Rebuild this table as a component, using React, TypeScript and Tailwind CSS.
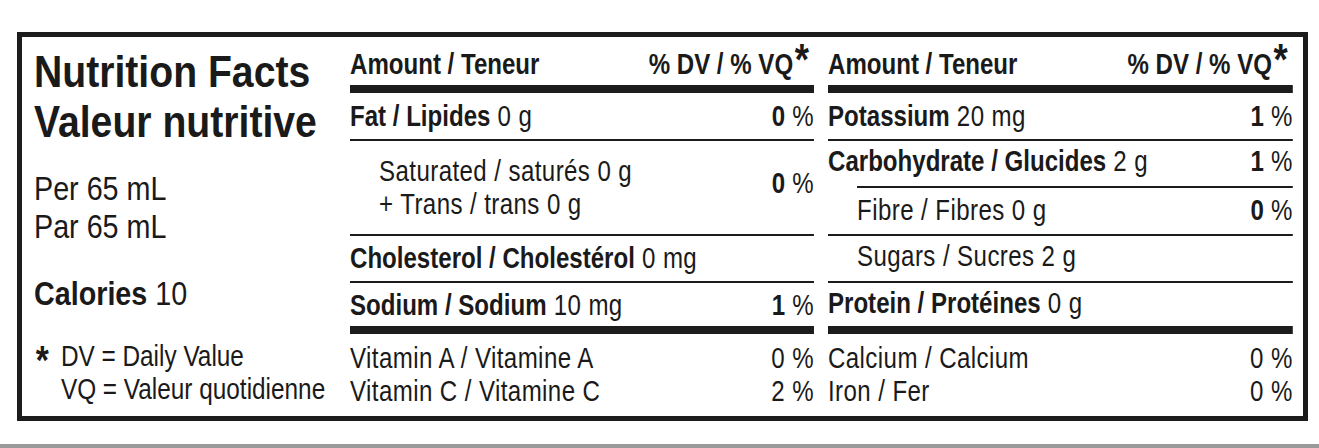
import React from 'react';

// Helvetica Condensed look: Liberation Sans squeezed horizontally per column

function B({ children }: { children: React.ReactNode }) {
  return <span className="font-bold tracking-normal">{children}</span>;
}

function Pct({ value, bold = true }: { value: string; bold?: boolean }) {
  return (
    <span className="whitespace-nowrap">
      {bold ? <B>{value}</B> : value} %
    </span>
  );
}

function Thin({ indent = false }: { indent?: boolean }) {
  return <div className={`h-[2px] bg-[#1c1c1c] ${indent ? 'ml-[35px]' : ''}`} />;
}

function Thick() {
  return <div className="h-[8px] bg-[#1c1c1c]" />;
}

function Header() {
  return (
    <div className="flex h-[48px] items-center justify-between pr-[6px] pt-[8px] font-bold tracking-normal">
      <span>Amount / Teneur</span>
      <span className="whitespace-nowrap">
        % DV / % VQ<span className="relative top-[1px] ml-[2px] text-[44px] leading-[0px]">*</span>
      </span>
    </div>
  );
}

export default function App() {
  return (
    <div className="flex h-[448px] w-[1319px] flex-col overflow-hidden bg-white text-[#1a1a1a] font-['Liberation_Sans',Arial,sans-serif]">
      <div className="ml-[17px] mt-[32px] flex h-[389px] w-[1291px] shrink-0 border-[5px] border-[#1c1c1c] pl-[12px] pr-[10px] text-[29px]">
        {/* Left: title + serving */}
        <div className="w-[316px] shrink-0 whitespace-nowrap">
          <div className="mt-[10px] origin-left scale-x-[0.87] text-[45px] font-bold leading-[50px]">
            <div>Nutrition Facts</div>
            <div>Valeur nutritive</div>
          </div>
          <div className="mt-[23px] origin-left scale-x-[0.87] text-[33px] leading-[38px]">
            <div>Per 65 mL</div>
            <div>Par 65 mL</div>
          </div>
          <div className="mt-[29px] origin-left scale-x-[0.87] text-[33px] leading-[38px]">
            <span className="font-bold">Calories</span> 10
          </div>
          <div className="mt-[27px] grid origin-left scale-x-[0.84] grid-cols-[32px_1fr] leading-[33px]">
            <span className="relative top-[4px] pl-[2px] text-[40px] font-bold leading-[33px]">*</span>
            <span>DV = Daily Value</span>
            <span />
            <span>VQ = Valeur quotidienne</span>
          </div>
        </div>

        {/* Middle column */}
        <div className="w-[464px] shrink-0">
          <div className="w-[559px] origin-left scale-x-[0.83] tracking-[0.5px]">
            <Header />
            <Thick />
            <div className="flex h-[46px] items-center justify-between pt-[2px]">
              <span><B>Fat / Lipides</B> 0 g</span>
              <Pct value="0" />
            </div>
            <Thin />
            <div className="flex h-[93px] items-center justify-between pl-[35px] leading-[33px]">
              <div>
                <div>Saturated / saturés 0 g</div>
                <div>+ Trans / trans 0 g</div>
              </div>
              <span className="mb-[8px]">
                <Pct value="0" />
              </span>
            </div>
            <Thin />
            <div className="flex h-[45px] items-center">
              <span><B>Cholesterol / Cholestérol</B> 0 mg</span>
            </div>
            <Thin />
            <div className="flex h-[43px] items-center justify-between pt-[2px]">
              <span><B>Sodium / Sodium</B> 10 mg</span>
              <Pct value="1" />
            </div>
            <Thick />
            <div className="flex h-[82px] flex-col justify-center leading-[33px]">
              <div className="flex justify-between">
                <span>Vitamin A / Vitamine A</span>
                <Pct value="0" bold={false} />
              </div>
              <div className="flex justify-between">
                <span>Vitamin C / Vitamine C</span>
                <Pct value="2" bold={false} />
              </div>
            </div>
          </div>
        </div>

        {/* Right column */}
        <div className="ml-[14px] w-[465px] shrink-0">
          <div className="w-[560px] origin-left scale-x-[0.83] tracking-[0.5px]">
            <Header />
            <Thick />
            <div className="flex h-[46px] items-center justify-between pt-[2px]">
              <span><B>Potassium</B> 20 mg</span>
              <Pct value="1" />
            </div>
            <Thin />
            <div className="flex h-[45px] items-center justify-between pb-[3px]">
              <span><B>Carbohydrate / Glucides</B> 2 g</span>
              <Pct value="1" />
            </div>
            <Thin indent />
            <div className="flex h-[46px] items-center justify-between pl-[35px]">
              <span>Fibre / Fibres 0 g</span>
              <Pct value="0" />
            </div>
            <Thin />
            <div className="flex h-[45px] items-center pb-[4px] pl-[35px]">
              <span>Sugars / Sucres 2 g</span>
            </div>
            <Thin />
            <div className="flex h-[43px] items-center pb-[2px]">
              <span><B>Protein / Protéines</B> 0 g</span>
            </div>
            <Thick />
            <div className="flex h-[82px] flex-col justify-center leading-[33px]">
              <div className="flex justify-between">
                <span>Calcium / Calcium</span>
                <Pct value="0" bold={false} />
              </div>
              <div className="flex justify-between">
                <span>Iron / Fer</span>
                <Pct value="0" bold={false} />
              </div>
            </div>
          </div>
        </div>
      </div>
      <div className="mt-auto h-[4px] shrink-0 bg-[#9a9a9a]" />
    </div>
  );
}
